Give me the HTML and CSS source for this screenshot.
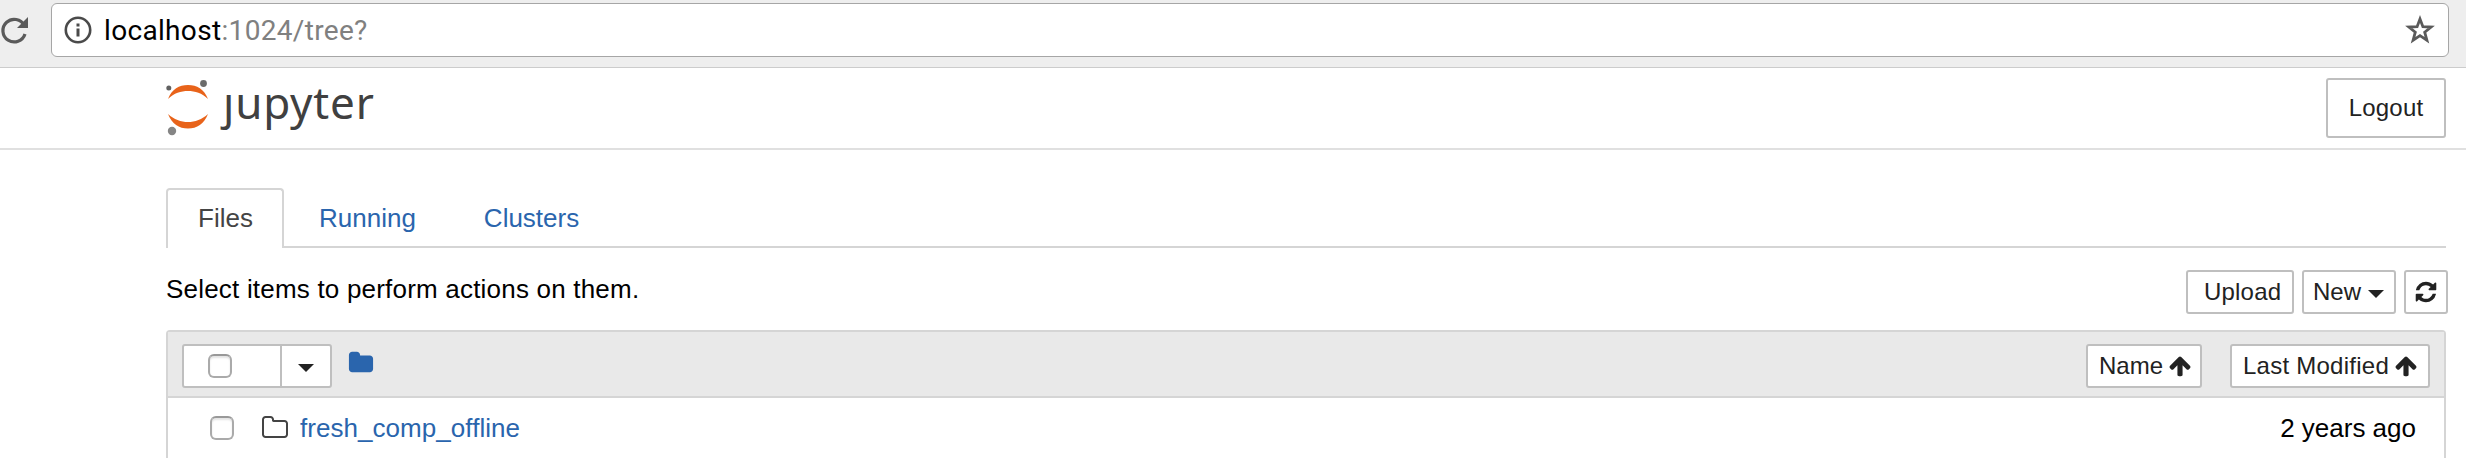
FILE: index.html
```html
<!DOCTYPE html>
<html lang="en">
<head>
<meta charset="utf-8">
<title>Home</title>
<link rel="stylesheet" href="styles.css">
</head>
<body>
<svg class="defs" width="0" height="0" aria-hidden="true">
  <symbol id="arrow-up" viewBox="0 0 1792 1792"><path d="M1675 971q0 51-37 90l-75 75q-38 38-91 38-54 0-90-38l-294-293v704q0 52-37.5 84.5t-90.5 32.5h-128q-53 0-90.5-32.5t-37.5-84.5v-704l-294 293q-36 38-90 38t-90-38l-75-75q-38-38-38-90 0-53 38-91l651-651q35-37 90-37 54 0 91 37l651 651q37 39 37 91z"/></symbol>
</svg>
<div class="browser-bar">
  <svg class="reload" viewBox="0 0 28 30"><path d="M24.300 10.500A11.300 11.300 0 1 0 25 19" fill="none" stroke="#5a5a5a" stroke-width="3.200"/><path d="M28 2v11H17z" fill="#5a5a5a"/></svg>
  <div class="address">
    <svg class="info" viewBox="0 0 28 28"><circle cx="14" cy="14" r="12.200" fill="none" stroke="#4a4a4a" stroke-width="2.600"/><path d="M12.500 7.500h3v3h-3zM12.500 12.500h3v8h-3z" fill="#4a4a4a"/></svg>
    <span class="url"><span class="host">localhost</span><span class="path">:1024/tree?</span></span>
    <svg class="star" viewBox="0 0 30 30"><path d="M15 4l2.900 7.700 8.200.3-6.400 5.200 2.200 8-6.900-4.500-6.900 4.500 2.200-8-6.400-5.200 8.200-.3z" fill="none" stroke="#5a5a5a" stroke-width="2.800"/></svg>
  </div>
</div>
<header class="header">
  <div class="logo">
    <svg class="mark" viewBox="0 0 44 58"><path d="M2 20C6 10 13 6 22 6s16 4 20 14C36 14 29 12 22 12S8 14 2 20zM2 35c4 10 11 14.500 20 14.500S38 45 42 35c-6 5.500-13 8-20 8S8 40.500 2 35z" fill="#e8631a"/><circle cx="2.800" cy="9" r="2.500" fill="#616161"/><circle cx="37.500" cy="4.500" r="3.400" fill="#6b6b6b"/><circle cx="6" cy="52" r="4.200" fill="#858585"/></svg>
    <span class="wordmark">ȷupyter</span>
  </div>
  <button class="btn logout">Logout</button>
</header>
<main class="content">
  <nav class="tabs">
    <a class="tab active">Files</a>
    <a class="tab running">Running</a>
    <a class="tab clusters">Clusters</a>
  </nav>
  <div class="toolbar">
    <span class="hint">Select items to perform actions on them.</span>
    <div class="actions">
      <button class="btn upload">Upload</button>
      <button class="btn new">New<i class="caret"></i></button>
      <button class="btn refresh"><svg viewBox="0 0 1792 1792"><path d="M1639 1056q0 5-1 7-64 268-268 434.500t-478 166.500q-146 0-282.500-55t-243.500-157l-129 129q-19 19-45 19t-45-19-19-45v-448q0-26 19-45t45-19h448q26 0 45 19t19 45-19 45l-137 137q71 66 161 102t187 36q134 0 250-65t186-179q11-17 53-117 8-23 30-23h192q13 0 22.500 9.500t9.500 22.500zm25-800v448q0 26-19 45t-45 19h-448q-26 0-45-19t-19-45 19-45l138-138q-148-137-349-137-134 0-250 65t-186 179q-11 17-53 117-8 23-30 23h-199q-13 0-22.500-9.500t-9.500-22.500v-7q65-268 270-434.500t480-166.500q146 0 284 55.500t245 156.500l130-129q19-19 45-19t45 19 19 45z"/></svg></button>
    </div>
  </div>
  <section class="list">
    <div class="list-head">
      <div class="select-group">
        <div class="select-all"><span class="check"></span></div>
        <div class="select-menu"><i class="caret"></i></div>
      </div>
      <svg class="folder" viewBox="0 0 1792 1792"><path d="M1728 608v704q0 92-66 158t-158 66h-1216q-92 0-158-66t-66-158v-960q0-92 66-158t158-66h320q92 0 158 66t66 158v32h672q92 0 158 66t66 158z"/></svg>
      <div class="sorts">
        <button class="btn name">Name<svg><use href="#arrow-up"/></svg></button>
        <button class="btn modified">Last Modified<svg><use href="#arrow-up"/></svg></button>
      </div>
    </div>
    <div class="row">
      <span class="check"></span>
      <svg class="folder-open" viewBox="0 0 1792 1792"><path d="M1600 1312v-704q0-40-28-68t-68-28h-704q-40 0-68-28t-28-68v-64q0-40-28-68t-68-28h-320q-40 0-68 28t-28 68v960q0 40 28 68t68 28h1216q40 0 68-28t28-68zm128-704v704q0 92-66 158t-158 66h-1216q-92 0-158-66t-66-158v-960q0-92 66-158t158-66h320q92 0 158 66t66 158v32h672q92 0 158 66t66 158z"/></svg>
      <a class="item">fresh_comp_offline</a>
      <span class="date">2 years ago</span>
    </div>
  </section>
</main>
</body>
</html>
```
FILE: styles.css
```css
* { box-sizing: border-box; }
html, body { margin: 0; height: 458px; overflow: hidden; background: #fff; }
body { font-family: "Liberation Sans", Arial, sans-serif; font-size: 26px; color: #000; }
svg { display: block; flex: none; }
.defs { position: absolute; }

.browser-bar { height: 68px; background: #eee; border-bottom: 1px solid #ccc; display: flex; align-items: flex-start; padding: 3px 17px 0 0; }
.reload { width: 28px; height: 30px; margin: 12px 23px 0 0; }
.address { flex: 1; height: 54px; background: #fff; border: 1px solid #a6a6a6; border-radius: 6px; display: flex; align-items: center; padding: 0 13px 0 12px; }
.info { width: 28px; height: 28px; }
.url { margin-left: 12px; padding-top: 2px; font: 28px/52px Roboto, sans-serif; letter-spacing: .33px; white-space: nowrap; }
.path { color: #808080; }
.star { width: 30px; height: 30px; margin-left: auto; }

.header { height: 82px; border-bottom: 2px solid #e0e0e0; display: flex; justify-content: space-between; align-items: flex-start; padding: 10px 20px 0 166px; }
.logo { display: flex; }
.mark { width: 44px; height: 58px; margin-top: 1px; }
.wordmark { font: 44px/60px "Noto Sans", sans-serif; letter-spacing: .8px; color: #404040; margin-left: 13px; margin-top: -6px; }

.btn { font: 24px/40px "Liberation Sans", Arial, sans-serif; color: #222; background: #fff; border: 2px solid #bfbfbf; border-radius: 3px; height: 44px; padding: 0; margin: 0; display: flex; align-items: center; white-space: nowrap; fill: #222; }
.logout { width: 120px; height: 60px; justify-content: center; letter-spacing: .2px; }

.content { padding: 38px 18px 0 166px; }
.tabs { display: flex; height: 60px; width: 2280px; border-bottom: 2px solid #d5d5d5; }
.tab { line-height: 56px; height: 60px; color: #2a65ad; padding-top: 2px; }
.active { width: 118px; border: 2px solid #d5d5d5; border-bottom: 0; border-radius: 4px 4px 0 0; background: #fff; color: #444; padding: 0 0 0 30px; }
.running { margin-left: 35px; }
.clusters { margin-left: 68px; }

.toolbar { display: flex; justify-content: space-between; height: 82px; padding-top: 22px; }
.hint { line-height: 38px; letter-spacing: .2px; }
.actions { display: flex; gap: 8px; }
.upload { width: 108px; padding-left: 16px; letter-spacing: .2px; }
.new { width: 94px; padding-left: 9px; }
.caret { width: 0; height: 0; border: 8px solid transparent; border-top-color: #222; border-bottom: 0; }
.new .caret { margin: 3px 0 0 7px; }
.refresh { width: 44px; justify-content: center; padding-right: 1px; }
.refresh svg { width: 24px; height: 24px; }

.list { width: 2280px; height: 140px; border: 2px solid #d5d5d5; border-bottom: 0; border-radius: 4px 4px 0 0; }
.list-head { height: 66px; background: #e9e9e9; border-bottom: 2px solid #d5d5d5; display: flex; align-items: flex-start; padding: 12px 14px 0; }
.select-group { display: flex; width: 150px; height: 44px; background: #fff; border: 2px solid #bfbfbf; border-radius: 3px; }
.select-all { width: 98px; border-right: 2px solid #bfbfbf; padding: 8px 0 0 24px; }
.select-menu { flex: 1; display: flex; justify-content: center; padding-top: 18px; }
.check { display: block; flex: none; width: 24px; height: 24px; border: 2px solid #aaa; border-top-color: #999; border-radius: 6px; background: #fff; box-shadow: inset 0 2px 2px #e4e4e4; }
.folder { width: 26px; height: 26px; margin: 6px 0 0 16px; fill: #2a65ad; }
.sorts { display: flex; gap: 28px; margin-left: auto; }
.sorts .btn { padding-left: 11px; }
.sorts svg { width: 24px; height: 24px; margin-left: 5px; }
.name { width: 116px; }
.modified { width: 200px; letter-spacing: .25px; }
.row { display: flex; align-items: center; height: 60px; padding: 0 28px 0 42px; }
.folder-open { width: 28px; height: 28px; margin-left: 27px; fill: #444; }
.item { color: #2a65ad; margin-left: 11px; letter-spacing: .05px; padding-top: 1px; }
.date { margin-left: auto; }
```
